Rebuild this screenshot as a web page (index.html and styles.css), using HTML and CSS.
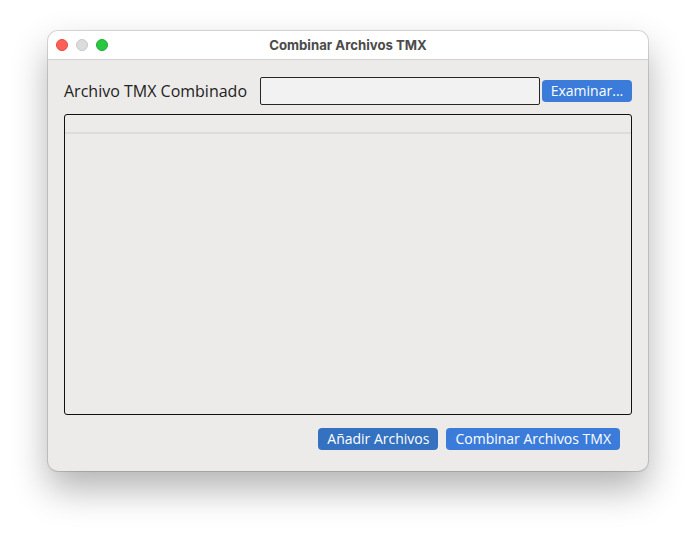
FILE: index.html
```html
<!DOCTYPE html>
<html lang="es">
<head>
    <meta charset="UTF-8">
    <title>Combinar Archivos TMX</title>
    <link rel="stylesheet" href="styles.css">
</head>
<body>
    <div class="window">
        <div class="titlebar">
            <div class="lights">
                <span class="light red"></span>
                <span class="light grey"></span>
                <span class="light green"></span>
            </div>
            <div class="title">Combinar Archivos TMX</div>
        </div>

        <div class="content">
            <!-- archivo de salida -->
            <div class="file-row">
                <label class="file-label" for="outFile">Archivo TMX Combinado</label>
                <input type="text" id="outFile" class="file-input">
                <button class="btn">Examinar...</button>
            </div>

            <!-- lista de archivos -->
            <div class="file-list">
                <div class="list-header"></div>
            </div>

            <div class="actions">
                <button class="btn btn-dark">Añadir Archivos</button>
                <button class="btn">Combinar Archivos TMX</button>
            </div>
        </div>
    </div>
</body>
</html>
```

FILE: styles.css
```css
html, body {
    height: 100%;
}
body {
    margin: 0;
    padding: 31px 0 0 48px;
    box-sizing: border-box;
    background: #ffffff;
    font-family: 'Open Sans', 'Noto Sans', sans-serif;
}
.window {
    width: 600px;
    height: 440px;
    background: #ecebe9;
    border-radius: 10px;
    box-shadow: 0 0 0 1px rgba(0, 0, 0, 0.14), 0 18px 36px rgba(0, 0, 0, 0.3);
    overflow: hidden;
    display: flex;
    flex-direction: column;
}
.titlebar {
    height: 28px;
    background: #ffffff;
    border-bottom: 1px solid #d2d2d2;
    position: relative;
    display: flex;
    align-items: center;
    justify-content: center;
}
.lights {
    position: absolute;
    left: 8px;
    top: 8px;
    display: flex;
    gap: 8px;
}
.light {
    width: 12px;
    height: 12px;
    border-radius: 50%;
    box-sizing: border-box;
}
.red {
    background: #fe5f57;
    border: 1px solid #e2463f;
}
.grey {
    background: #dcdcdc;
    border: 1px solid #c8c8c8;
}
.green {
    background: #28c840;
    border: 1px solid #1eaa32;
}
.title {
    font-family: Inter, 'Liberation Sans', sans-serif;
    font-weight: 700;
    font-size: 13.2px;
    color: #4b4b4b;
}
.content {
    flex: 1;
    padding: 17px 16px 0 16px;
    display: flex;
    flex-direction: column;
}
.file-row {
    display: flex;
    align-items: center;
    height: 28px;
}
.file-label {
    font-size: 16px;
    color: #222;
    width: 196px;
}
.file-input {
    width: 280px;
    height: 28px;
    box-sizing: border-box;
    background: #f3f2f2;
    border: 1px solid #262626;
    border-radius: 2px;
    margin: 0 2px 0 0;
    padding: 0 6px;
}
.btn {
    background: #3b7cdb;
    color: #ffffff;
    border: none;
    border-radius: 4px;
    font-family: 'Open Sans', 'Noto Sans', sans-serif;
    font-size: 14px;
    height: 22px;
    padding: 0 9px;
    line-height: 22px;
}
.file-row .btn {
    width: 90px;
    padding: 0;
}
.file-list {
    margin-top: 9px;
    height: 301px;
    box-sizing: border-box;
    border: 1px solid #111;
    border-radius: 3px;
    background: #ecebe9;
}
.list-header {
    height: 17px;
    border-bottom: 2px solid #dddcda;
}
.actions {
    display: flex;
    justify-content: flex-end;
    gap: 8px;
    padding-right: 12px;
    margin-top: 13px;
}
.btn-dark {
    background: #3471c1;
}
```
